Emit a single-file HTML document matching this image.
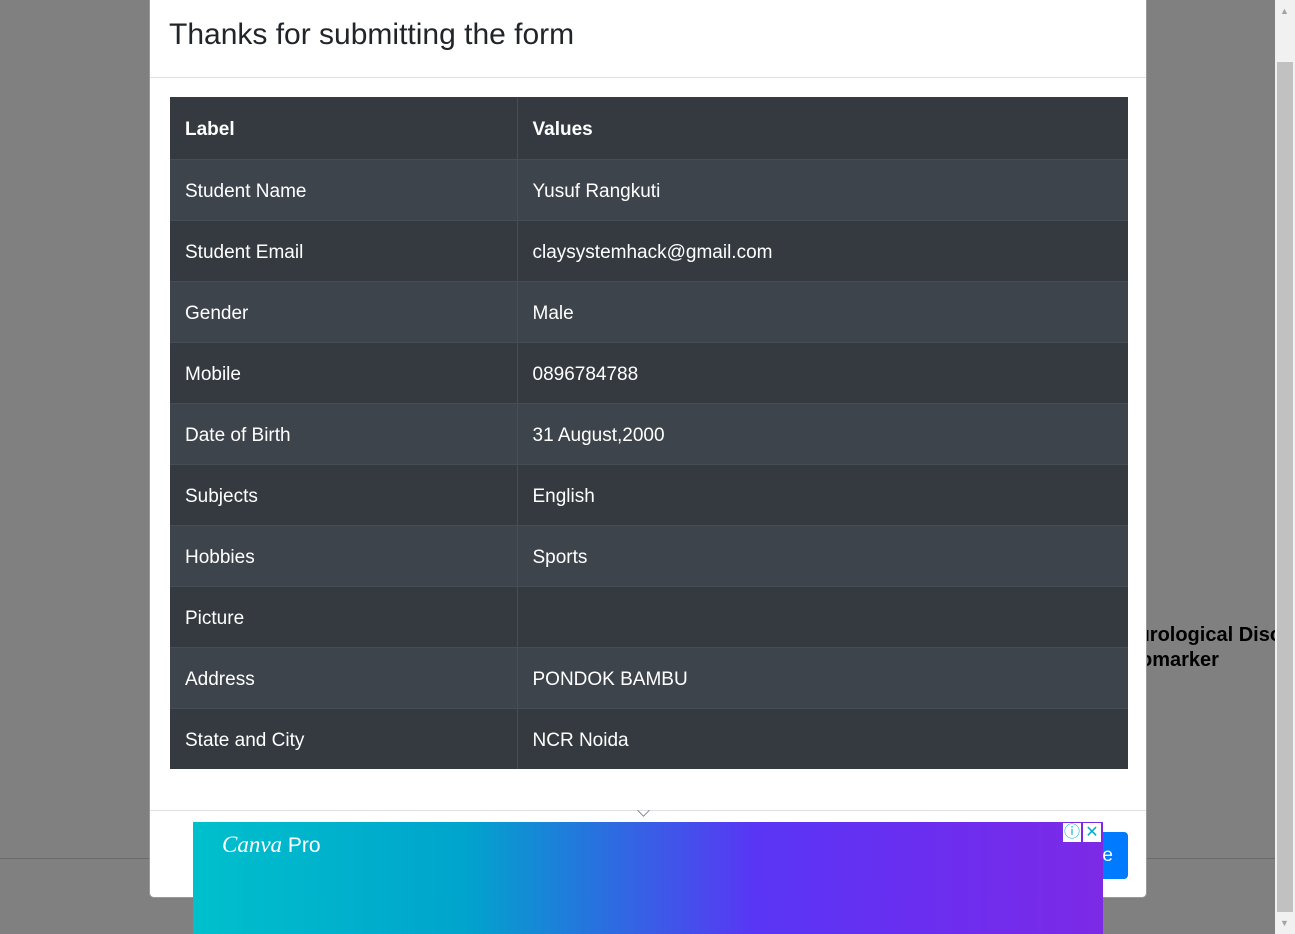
<!DOCTYPE html>
<html><head><style>
body{margin:0;width:1295px;height:934px;overflow:hidden;background:#808080;font-family:"Liberation Sans",sans-serif;position:relative}
.line{position:absolute;left:0;top:858px;width:1275px;height:1px;background:#6a6a6a}
.bt{position:absolute;font-weight:bold;font-size:20px;line-height:25px;color:#000;white-space:nowrap}
.modal{position:absolute;left:149px;top:-10px;width:998px;height:908px;background:#fff;border-radius:5px;border:1px solid #999;box-sizing:border-box}
.hdr{position:absolute;left:0;top:0;width:100%;height:86px;border-bottom:1px solid #dee2e6}
.hdr h5{position:absolute;left:19px;top:27px;margin:0;font-size:30px;font-weight:normal;color:#212529}
table{position:absolute;left:20px;top:106px;width:958px;border-collapse:collapse;color:#fff;font-size:19px}
td{height:61px;border-top:1px solid #454d55;padding:4px 15px 0;box-sizing:border-box}
td:first-child{width:347px;border-right:1px solid #454d55}
tr{background:#343a40}
tr:nth-child(even){background:#3e444b}
tr:first-child td{font-weight:bold;border-top:none;height:62px}
.ftr{position:absolute;left:0;top:819px;width:100%;border-top:1px solid #dee2e6}
.btn{position:absolute;left:930px;top:841px;width:48px;height:47px;background:#007bff;border-radius:4px;color:#fff;font-size:19px;line-height:47px;text-align:right;padding-right:15px;box-sizing:border-box}
.ad{position:absolute;left:193px;top:822px;width:910px;height:112px;background:linear-gradient(90deg,#00c0cc 0%,#00a4cc 30%,#2a6fe0 45%,#5a35f5 62%,#6a2ef0 80%,#7c2ae6 100%)}
.ad .logo{position:absolute;left:29px;top:10px;color:#fff;font-size:23px;font-style:italic;font-family:"Liberation Serif",serif}
.ad .logo span{font-style:normal;font-family:"Liberation Sans",sans-serif;font-size:21px}
.x{position:absolute;top:1px;width:18px;height:19px;background:#fff;color:#00aecd;font-size:16px;text-align:center;line-height:19px}
.chev{position:absolute;left:638px;top:805px;width:10px;height:10px;border-right:1.5px solid #777;border-bottom:1.5px solid #777;transform:rotate(45deg) scale(.8,.8)}
.sb{position:absolute;left:1275px;top:0;width:20px;height:934px;background:#f1f1f1}
.thumb{position:absolute;left:1277px;top:62px;width:16px;height:850px;background:#c1c1c1}
.ar{position:absolute;left:1280px;font-size:9px;color:#a3a3a3}
</style></head><body>
<div class="line"></div>
<div class="bt" style="left:1112px;top:623px">Neurological Disorders</div>
<div class="bt" style="left:1120px;top:648px">Biomarker</div>
<div class="modal">
<div class="hdr"><h5>Thanks for submitting the form</h5></div>
<table>
<tr><td>Label</td><td>Values</td></tr>
<tr><td>Student Name</td><td>Yusuf Rangkuti</td></tr>
<tr><td>Student Email</td><td>claysystemhack@gmail.com</td></tr>
<tr><td>Gender</td><td>Male</td></tr>
<tr><td>Mobile</td><td>0896784788</td></tr>
<tr><td>Date of Birth</td><td>31 August,2000</td></tr>
<tr><td>Subjects</td><td>English</td></tr>
<tr><td>Hobbies</td><td>Sports</td></tr>
<tr><td>Picture</td><td></td></tr>
<tr><td>Address</td><td>PONDOK BAMBU</td></tr>
<tr><td>State and City</td><td>NCR Noida</td></tr>
</table>
<div class="ftr"></div>
<div class="btn">e</div>
</div>
<div class="chev"></div>
<div class="ad"><div class="logo">Canva <span>Pro</span></div>
<div class="x" style="left:870px">ⓘ</div><div class="x" style="left:890px">✕</div></div>
<div class="sb"></div><div class="thumb"></div>
<div class="ar" style="top:6px">▲</div><div class="ar" style="top:918px">▼</div>
</body></html>
